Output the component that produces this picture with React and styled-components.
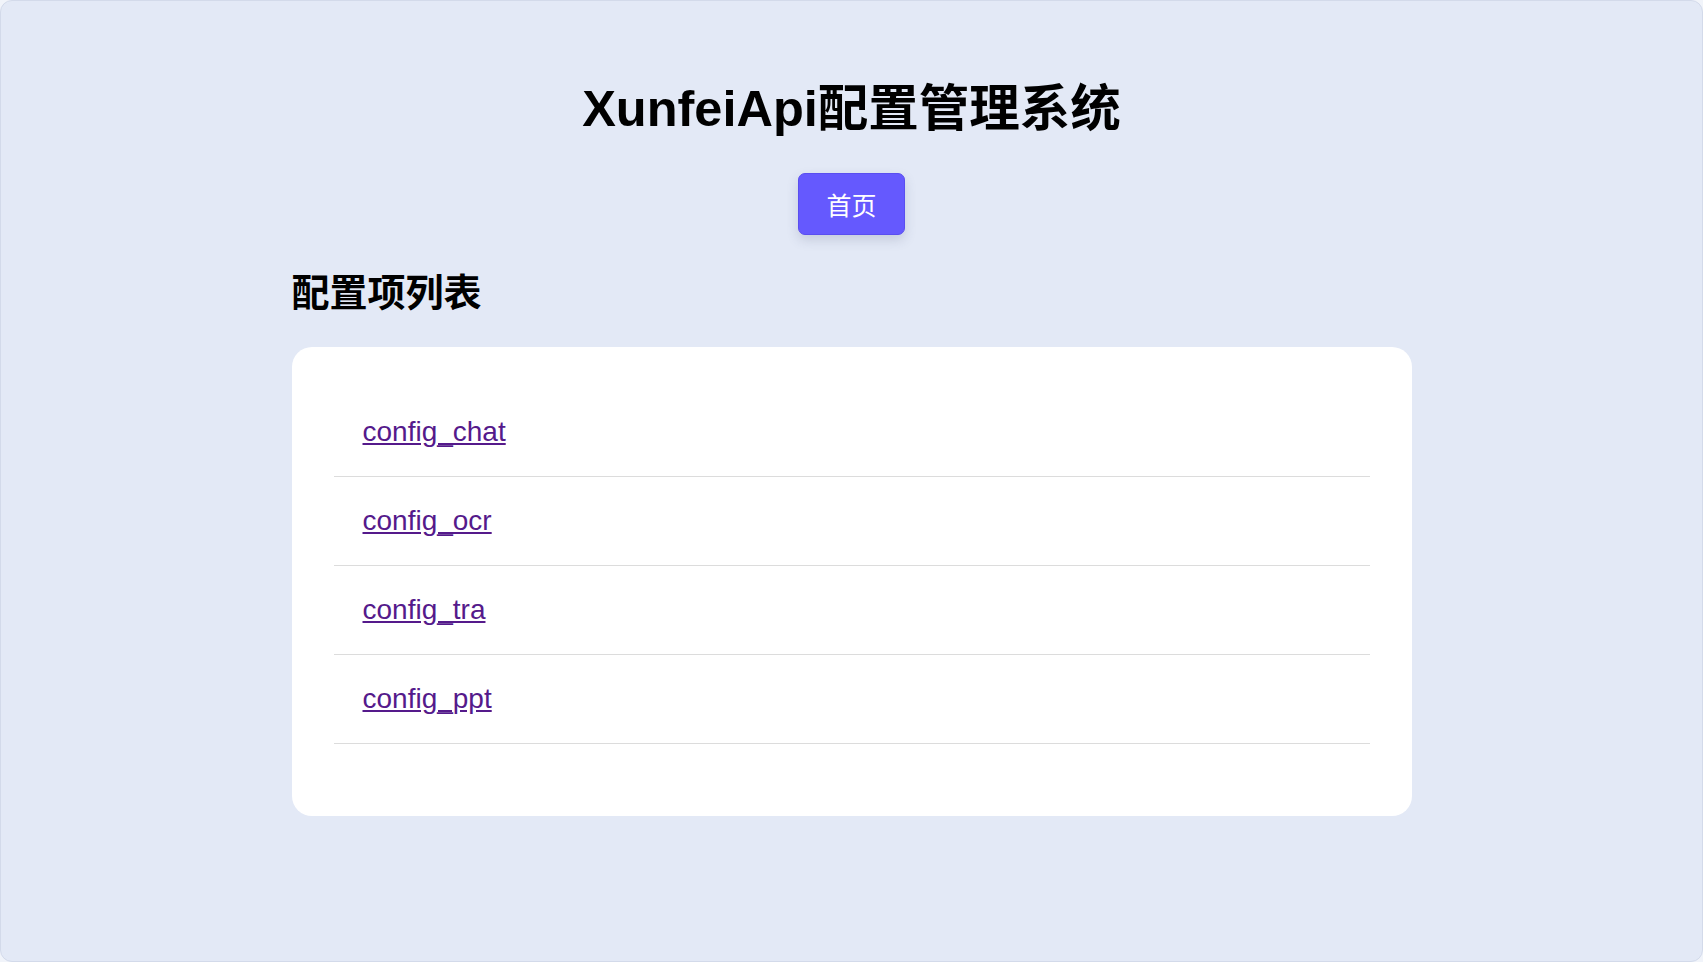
import React from 'react'
import styled, { createGlobalStyle } from 'styled-components';

const configs = ['config_chat', 'config_ocr', 'config_tra', 'config_ppt'];

function App() {
    return (
        <>
            <GlobalStyle/>
            <Page>
                <Main>
                    <Title>XunfeiApi配置管理系统</Title>
                    <Nav>
                        <HomeButton href="#">首页</HomeButton>
                    </Nav>
                    <SectionTitle>配置项列表</SectionTitle>
                    <Card>
                        <ConfigList>
                            {configs.map(name => (
                                <ConfigItem key={name}>
                                    <ConfigLink href="#">{name}</ConfigLink>
                                </ConfigItem>
                            ))}
                        </ConfigList>
                    </Card>
                </Main>
            </Page>
        </>
    )
}

export default App;

const GlobalStyle = createGlobalStyle`
    html, body {
        margin: 0;
        padding: 0;
        background: #f1f4fa;
    }

    body {
        font-family: "Liberation Sans", "Noto Sans CJK SC", Arial, sans-serif;
    }

    * {
        box-sizing: border-box;
    }
`;

const Page = styled.div`
    min-height: 100vh;
    background: #e3e9f6;
    border: 1px solid #d3daea;
    border-radius: 12px;
    padding-top: 78px;
`;

const Main = styled.div`
    width: 1120px;
    margin: 0 auto;
`;

const Title = styled.h1`
    margin: 0;
    text-align: center;
    font-size: 50.5px;
    line-height: 60px;
    font-weight: 700;
    color: #000;
`;

const Nav = styled.nav`
    display: flex;
    justify-content: center;
    margin-top: 34px;
`;

const HomeButton = styled.a`
    display: inline-flex;
    align-items: center;
    justify-content: center;
    width: 107px;
    height: 62px;
    background: #6559fe;
    border: 1px solid #5a4ef0;
    border-radius: 7px;
    color: #fff;
    font-size: 25px;
    text-decoration: none;
    box-shadow: 0 5px 12px rgba(60, 70, 110, 0.18);
`;

const SectionTitle = styled.h2`
    margin: 36px 0 0;
    font-size: 38px;
    line-height: 45px;
    font-weight: 700;
    color: #000;
`;

const Card = styled.div`
    margin-top: 31px;
    background: #fff;
    border-radius: 20px;
    padding: 41px 42px 72px;
`;

const ConfigList = styled.ul`
    list-style: none;
    margin: 0;
    padding: 0;
`;

const ConfigItem = styled.li`
    display: flex;
    align-items: center;
    height: 89px;
    padding: 0 29px;
    border-bottom: 1px solid #dcdcdc;
`;

const ConfigLink = styled.a`
    font-size: 28px;
    line-height: 32px;
    color: #551a8b;
    text-decoration: underline;
`;
